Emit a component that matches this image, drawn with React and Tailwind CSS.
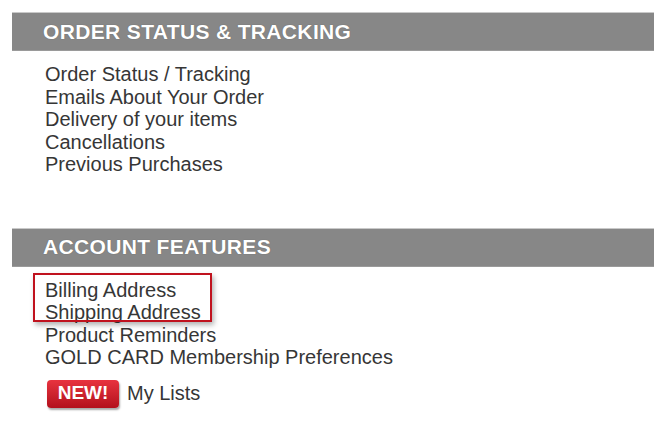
import React from "react";

const orderLinks = [
  "Order Status / Tracking",
  "Emails About Your Order",
  "Delivery of your items",
  "Cancellations",
  "Previous Purchases",
];

const SectionHeader = ({ title }) => (
  <div className="h-[39px] bg-[#878787] border-t border-[#c9c9c9] border-b border-b-[#9a9a9a] flex items-center pl-[31px]">
    <h2 className="text-white font-bold text-[21px] tracking-[0.35px] [text-shadow:0_0_1px_rgba(0,0,0,0.35)]">
      {title}
    </h2>
  </div>
);

export default function App() {
  return (
    <div
      className="w-[665px] h-[424px] bg-white pt-[12px] pl-[12px] text-[#363636] overflow-hidden"
      style={{ fontFamily: '"Liberation Sans", Arial, sans-serif' }}
    >
      <div className="w-[642px]">
        <SectionHeader title="ORDER STATUS & TRACKING" />
        <ul className="mt-[12px] ml-[33px] text-[20px] leading-[22.5px]">
          {orderLinks.map((l) => (
            <li key={l}>
              <a href="#">{l}</a>
            </li>
          ))}
        </ul>

        <div className="mt-[52px]">
          <SectionHeader title="ACCOUNT FEATURES" />
        </div>
        <div className="relative mt-[12px] ml-[33px] text-[20px] leading-[22.5px]">
          <div className="absolute left-[-12px] top-[-6px] w-[179px] h-[49px] border-2 border-[#c0121e] shadow-[2px_3px_5px_rgba(0,0,0,0.3)] pointer-events-none" />
          <ul>
            <li><a href="#">Billing Address</a></li>
            <li><a href="#">Shipping Address</a></li>
            <li><a href="#">Product Reminders</a></li>
            <li><a href="#">GOLD CARD Membership Preferences</a></li>
          </ul>
          <div className="mt-[11px] ml-[2px] flex items-center gap-[8px]">
            <span className="w-[72px] h-[28px] rounded-[4px] bg-gradient-to-b from-[#e8333f] to-[#b30f1c] shadow-[1px_2px_2px_rgba(0,0,0,0.35)] flex items-center justify-center text-white font-bold text-[19px]">
              NEW!
            </span>
            <a href="#" className="text-[20px]">My Lists</a>
          </div>
        </div>
      </div>
    </div>
  );
}
